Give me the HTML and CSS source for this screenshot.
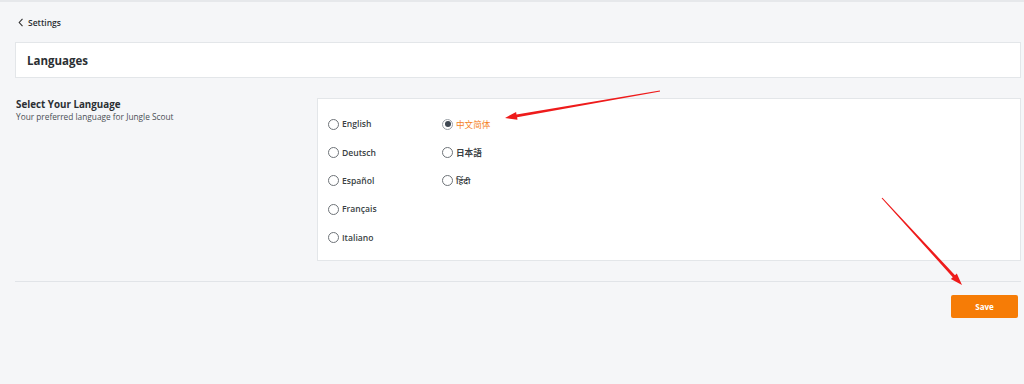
FILE: index.html
```html
<!DOCTYPE html>
<html lang="en">
<head>
    <meta charset="UTF-8">
    <meta name="viewport" content="width=device-width, initial-scale=1.0">
    <title>Languages</title>
    <link rel="stylesheet" href="styles.css">
</head>
<body>

    <div class="page">
        <a class="back-link" href="#">
            <svg class="back-icon" width="6" height="9" viewBox="0 0 6 9">
                <polyline points="4.5,0.8 1.2,4.5 4.5,8.2" fill="none" stroke="#333" stroke-width="1.1"/>
            </svg>
            Settings
        </a>

        <div class="title-card">
            <h1>Languages</h1>
        </div>

        <div class="lang-section">
            <div class="lang-intro">
                <h2>Select Your Language</h2>
                <p>Your preferred language for Jungle Scout</p>
            </div>

            <div class="lang-card">
                <div class="lang-grid">
                    <label class="lang-option"><span class="radio"></span>English</label>
                    <label class="lang-option"><span class="radio"></span>Deutsch</label>
                    <label class="lang-option"><span class="radio"></span>Español</label>
                    <label class="lang-option"><span class="radio"></span>Français</label>
                    <label class="lang-option"><span class="radio"></span>Italiano</label>
                    <label class="lang-option selected"><span class="radio"></span>中文简体</label>
                    <label class="lang-option"><span class="radio"></span>日本語</label>
                    <label class="lang-option"><span class="radio"></span>हिंदी</label>
                </div>
            </div>
        </div>

        <div class="divider"></div>

        <div class="actions">
            <button class="save-btn" type="button">Save</button>
        </div>
    </div>

    <!-- annotation arrows drawn on top of the screenshot -->
    <svg class="annotations" width="1024" height="384" viewBox="0 0 1024 384">
        <polygon fill="#ee1b1b" points="659.9,90.5 516.5,114.4 516.1,111.9 505,118 517.5,119.8 517.1,117.3 660.1,91.5"/>
        <polygon fill="#ee1b1b" points="881.6,198.3 952.8,277.2 950.9,278.9 962,285 956.8,273.5 955,275.2 882.4,197.7"/>
    </svg>

</body>
</html>
```

FILE: styles.css
```css
body {
    font-family: 'Open Sans', 'Noto Sans', 'Noto Sans CJK SC', sans-serif;
    margin: 0;
    padding: 0;
    min-height: 100vh;
    background-color: #f5f6f8;
    border-top: 2px solid #e6e8eb;
    box-sizing: border-box;
    color: #2b2f33;
    position: relative;
}

.page {
    padding: 0 3px 0 15px;
}

.back-link {
    display: flex;
    align-items: center;
    gap: 4px;
    padding: 13px 0 0 3px;
    height: 14px;
    font-size: 8.5px;
    font-weight: 600;
    color: #2b2f33;
    text-decoration: none;
}

.title-card {
    margin-top: 13px;
    height: 36px;
    box-sizing: border-box;
    background-color: white;
    border: 1px solid #e3e6e9;
    display: flex;
    align-items: center;
    padding-left: 11px;
}

.title-card h1 {
    margin: 0;
    font-size: 11.5px;
    font-weight: 700;
}

.lang-section {
    display: flex;
    margin-top: 20px;
}

.lang-intro {
    width: 301px;
    padding-left: 1px;
    flex-shrink: 0;
}

.lang-intro h2 {
    margin: 0;
    font-size: 9.8px;
    font-weight: 700;
    line-height: 13px;
}

.lang-intro p {
    margin: 1px 0 0;
    font-size: 8.3px;
    line-height: 10px;
    color: #4a4f55;
}

.lang-card {
    flex: 1;
    height: 163px;
    box-sizing: border-box;
    background-color: white;
    border: 1px solid #e3e6e9;
    padding: 11px 0 0 10px;
}

.lang-grid {
    display: grid;
    grid-template-rows: repeat(5, 28.4px);
    grid-template-columns: 114px 114px;
    grid-auto-flow: column;
}

.lang-option {
    display: flex;
    align-items: center;
    gap: 3px;
    font-size: 8.6px;
    font-weight: 600;
    color: #3a3f44;
}

.radio {
    width: 9px;
    height: 9px;
    border: 1px solid #6e7378;
    border-radius: 50%;
    background-color: white;
    position: relative;
}

.lang-option.selected {
    color: #f5821f;
    font-weight: 400;
}

.lang-option.selected .radio {
    border-color: #9aa0a6;
}

.lang-option.selected .radio::after {
    content: '';
    position: absolute;
    left: 1.5px;
    top: 1.5px;
    width: 6px;
    height: 6px;
    border-radius: 50%;
    background-color: #3f4852;
}

.divider {
    margin-top: 20px;
    border-top: 1px solid #e1e4e8;
}

.actions {
    display: flex;
    justify-content: flex-end;
    padding: 13px 3px 0 0;
}

.save-btn {
    width: 67px;
    height: 23px;
    background-color: #f67c06;
    color: white;
    border: none;
    border-radius: 2px;
    font-family: inherit;
    font-size: 8px;
    font-weight: 700;
    cursor: pointer;
}

.annotations {
    position: absolute;
    top: -2px;
    left: 0;
    pointer-events: none;
}
```
